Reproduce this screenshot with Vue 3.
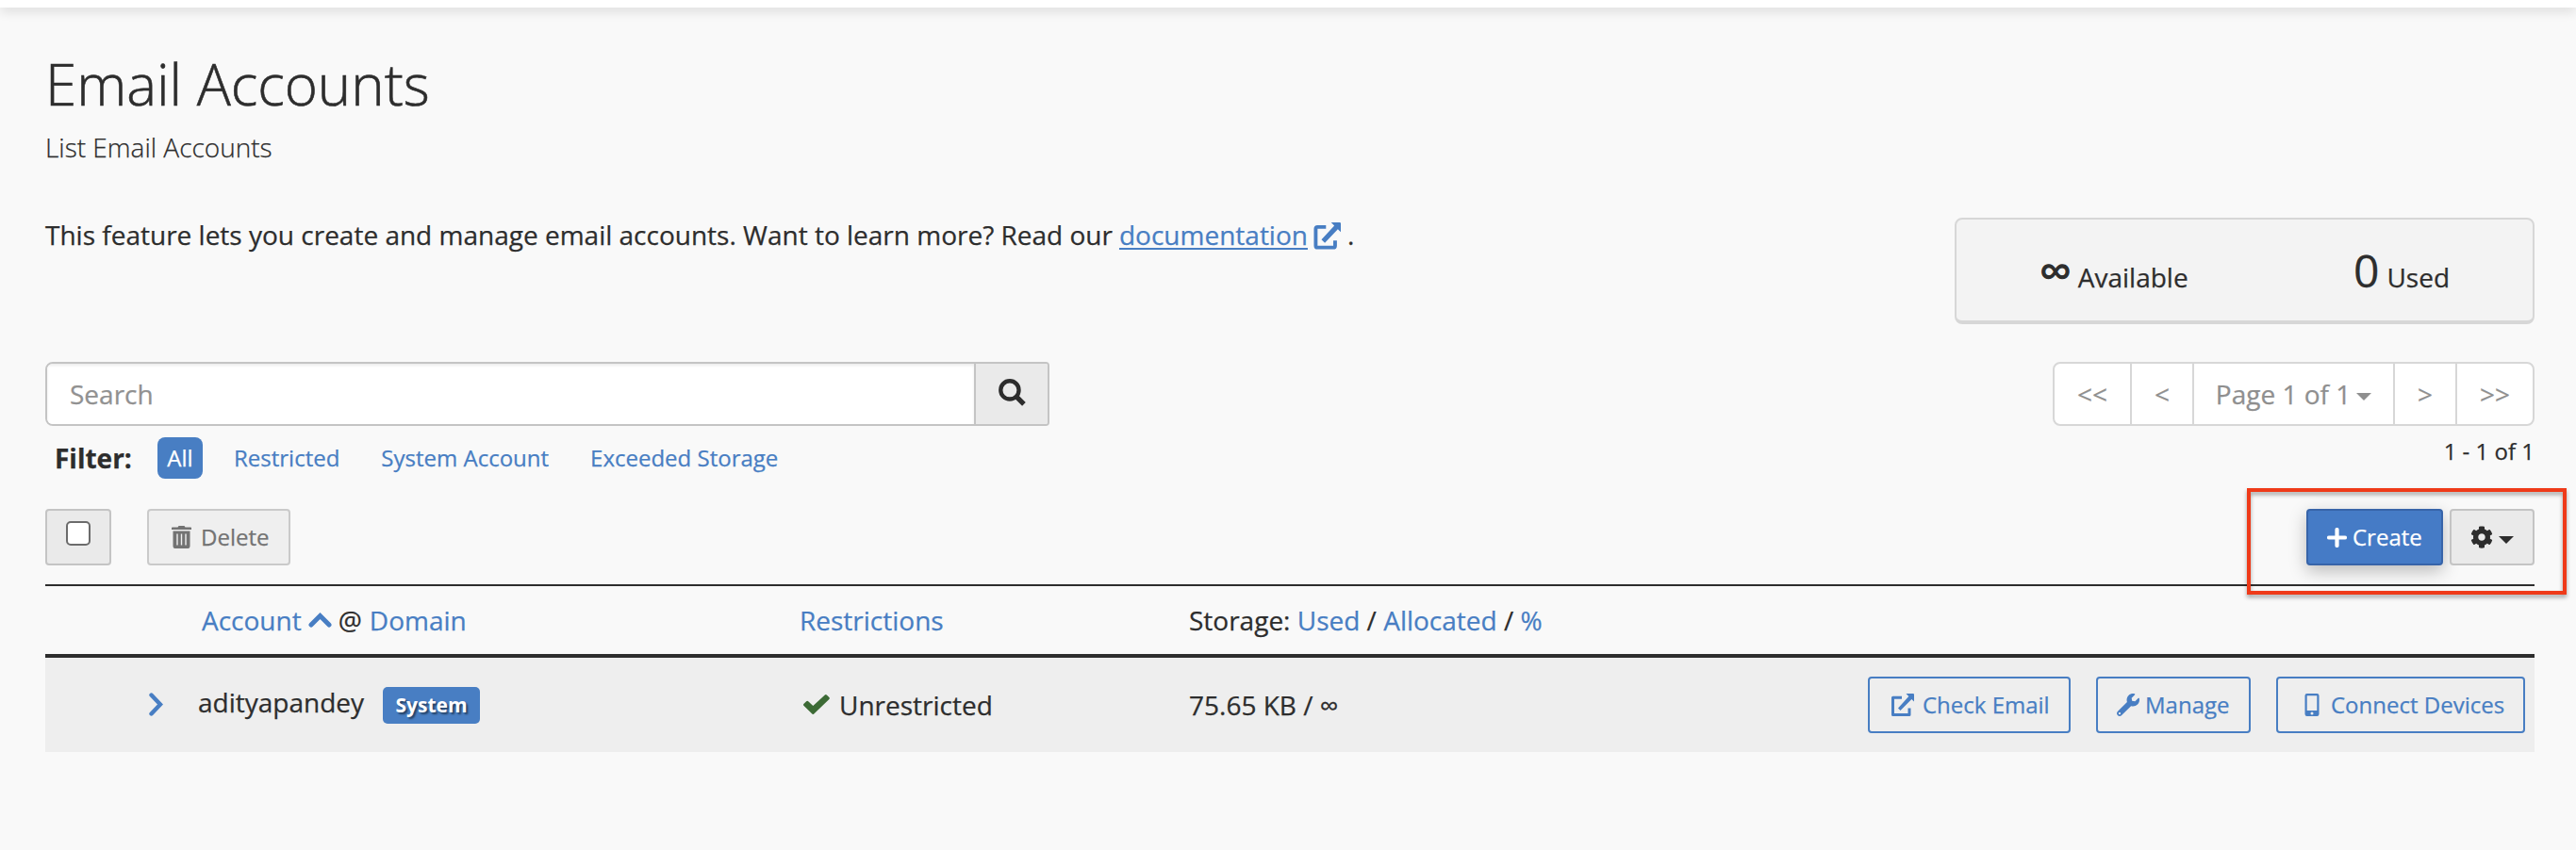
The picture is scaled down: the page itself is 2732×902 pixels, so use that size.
<script setup>
const filters = ['Restricted', 'System Account', 'Exceeded Storage']
</script>

<template>
  <div class="page">
    <div class="topbar"></div>
    <main class="content">
      <h1>Email Accounts</h1>
      <p class="subtitle">List Email Accounts</p>

      <section class="intro">
        <p class="lead"><span>This feature lets you create and manage email accounts. Want to learn more? Read our</span><a class="doc">documentation</a><svg class="ext-lg" viewBox="0 0 24 24"><path d="M11 4H3.600A1.600 1.600 0 0 0 2 5.600V20.400A1.600 1.600 0 0 0 3.600 22H17.400A1.600 1.600 0 0 0 19 20.400V16" fill="none" stroke="currentColor" stroke-width="3.200" /><path d="M15.500 0H23a1 1 0 0 1 1 1v7.500l-2.600-2.600L10 18l-3-3L18.300 2.900z" fill="currentColor" /></svg><span class="dot">.</span></p>
        <div class="stats">
          <div class="stat avail"><span class="big inf">∞</span> <span>Available</span></div>
          <div class="stat used"><span class="big">0</span> <span>Used</span></div>
        </div>
      </section>

      <section class="finder">
        <div class="search">
          <div class="input">Search</div>
          <div class="search-btn">
            <svg viewBox="0 0 28 28"><circle cx="11.500" cy="11.500" r="9.300" fill="none" stroke="currentColor" stroke-width="4.200" /><path d="M18 18l8 8" stroke="currentColor" stroke-width="5" /></svg>
          </div>
        </div>
        <div class="pager">
          <span class="p1">&lt;&lt;</span>
          <span class="p2">&lt;</span>
          <span class="p3">Page 1 of 1<i class="caret"></i></span>
          <span class="p4">&gt;</span>
          <span class="p5">&gt;&gt;</span>
        </div>
      </section>

      <section class="filters">
        <strong>Filter:</strong>
        <span class="pill">All</span>
        <a v-for="f in filters" :key="f">{{ f }}</a>
        <span class="count">1 - 1 of 1</span>
      </section>

      <section class="toolbar">
        <div class="btn check-all"><span class="checkbox"></span></div>
        <div class="btn delete">
          <svg viewBox="0 0 21 24"><path fill-rule="evenodd" fill="currentColor" d="M0.800 1.500H6.500L7.500 0h6l1 1.500h5.700a.8.800 0 0 1 .8.800V4H0V2.300a.8.800 0 0 1 .8-.8zM1.500 5.500h18V21.800A2.200 2.200 0 0 1 17.300 24H3.700a2.200 2.200 0 0 1-2.200-2.200zM5.300 8.500v12h1.400v-12zM9.800 8.500v12h1.400v-12zM14.300 8.500v12h1.400v-12z" /></svg>
          <span>Delete</span>
        </div>
        <div class="btn create">
          <svg viewBox="0 0 21 21"><path d="M10.500 2v17M2 10.500h17" stroke="currentColor" stroke-width="4.200" stroke-linecap="round" /></svg>
          <span>Create</span>
        </div>
        <div class="btn gear">
          <svg viewBox="0 0 512 512"><path fill="currentColor" d="M487.400 315.700l-42.600-24.600c4.300-23.200 4.300-47 0-70.200l42.600-24.600c4.900-2.800 7.100-8.600 5.500-14-11.100-35.600-30-67.800-54.700-94.600-3.800-4.100-10-5.100-14.800-2.300L380.800 110c-17.900-15.400-38.500-27.300-60.800-35.100V25.800c0-5.600-3.900-10.500-9.400-11.700-36.700-8.200-74.300-7.800-109.200 0-5.500 1.200-9.400 6.100-9.400 11.700V75c-22.200 7.900-42.800 19.800-60.800 35.100L88.700 85.500c-4.900-2.800-11-1.900-14.800 2.300-24.700 26.700-43.600 58.900-54.700 94.600-1.700 5.400.6 11.200 5.500 14L67.300 221c-4.300 23.200-4.300 47 0 70.200l-42.600 24.600c-4.900 2.800-7.100 8.600-5.500 14 11.100 35.600 30 67.800 54.700 94.600 3.800 4.100 10 5.100 14.800 2.300l42.600-24.600c17.900 15.400 38.500 27.300 60.800 35.100v49.200c0 5.600 3.900 10.500 9.400 11.700 36.700 8.200 74.300 7.800 109.200 0 5.500-1.200 9.400-6.100 9.400-11.700v-49.200c22.200-7.900 42.800-19.800 60.800-35.100l42.600 24.600c4.900 2.800 11 1.900 14.800-2.300 24.700-26.700 43.600-58.900 54.700-94.600 1.500-5.500-.7-11.300-5.600-14.100zM256 336c-44.100 0-80-35.900-80-80s35.900-80 80-80 80 35.900 80 80-35.900 80-80 80z" /></svg>
          <i class="caret"></i>
        </div>
        <div class="highlight"></div>
      </section>

      <div class="table">
        <div class="row head">
          <div class="account"><a>Account</a><svg class="sort" viewBox="0 0 25 17"><path d="M3 14l9.500-9.500L22 14" fill="none" stroke="currentColor" stroke-width="5" stroke-linecap="round" /></svg><span>@</span><a class="domain">Domain</a></div>
          <div class="restrict"><a>Restrictions</a></div>
          <div class="storage">Storage: <a>Used</a> / <a>Allocated</a> / <a>%</a></div>
        </div>
        <div class="row body">
          <svg class="expand" viewBox="0 0 15 25"><path d="M2.500 2.500l9.500 10-9.500 10" fill="none" stroke="currentColor" stroke-width="4.400" stroke-linecap="round" /></svg>
          <div class="account"><span class="name">adityapandey</span><span class="badge">System</span></div>
          <div class="restrict"><svg class="tick" viewBox="0 0 28 21"><path d="M0.600 9.800L3.200 7.300a1.500 1.500 0 0 1 2 0L10.300 12 22.800.500a1.500 1.500 0 0 1 2 0l2.600 2.500a1.500 1.500 0 0 1 0 2L11.300 20.600a1.500 1.500 0 0 1-2 0L.6 12a1.500 1.500 0 0 1 0-2.200z" fill="currentColor" /></svg>Unrestricted</div>
          <div class="storage">75.65 KB / ∞</div>
          <div class="actions">
            <div class="action mail">
              <svg viewBox="0 0 24 24"><path d="M11 4.200H1.500V22.500H19V15.500" fill="none" stroke="currentColor" stroke-width="3" stroke-linejoin="round" /><path d="M15.500 0H23a1 1 0 0 1 1 1v7.500l-2.600-2.600L9.500 18l-2.500-2.500L18.300 2.900z" fill="currentColor" /></svg>
              <span>Check Email</span>
            </div>
            <div class="action manage">
              <svg viewBox="0 0 512 512"><path fill="currentColor" d="M507.730 109.100c-2.240-9.030-13.540-12.090-20.120-5.510l-74.360 74.360-67.880-11.310-11.310-67.880 74.360-74.360c6.620-6.620 3.430-17.900-5.660-20.160-47.380-11.740-99.550.91-136.580 37.930-39.640 39.640-50.550 97.100-34.050 147.200L18.740 402.760c-24.990 24.990-24.990 65.510 0 90.500 24.990 24.990 65.510 24.990 90.500 0l213.210-213.210c50.120 16.710 107.470 5.680 147.370-34.220 37.070-37.070 49.700-89.320 37.910-136.730zM64 472c-13.250 0-24-10.750-24-24 0-13.260 10.750-24 24-24s24 10.740 24 24c0 13.250-10.750 24-24 24z" /></svg>
              <span>Manage</span>
            </div>
            <div class="action devices">
              <svg viewBox="0 0 15 24"><path fill="currentColor" fill-rule="evenodd" d="M2.200 0h10.600A2.200 2.200 0 0 1 15 2.200v19.600a2.200 2.200 0 0 1-2.200 2.200H2.200A2.200 2.200 0 0 1 0 21.800V2.200A2.200 2.200 0 0 1 2.200 0zM2.200 2.300v15.700h10.600V2.300zM7.500 19.500a1.500 1.500 0 1 0 0 3 1.500 1.500 0 0 0 0-3z" /></svg>
              <span>Connect Devices</span>
            </div>
          </div>
        </div>
      </div>
    </main>
  </div>
</template>

<style>
html, body { background: #f9f9f9; }
</style>

<style scoped>
* { box-sizing: border-box; }
.page {
  height: 902px; overflow: hidden; background: #f9f9f9; color: #2d2d2d;
  font-family: "Open Sans", "Noto Sans", sans-serif; font-size: 28px; line-height: 40px;
  -webkit-text-stroke: .25px currentColor;
}
svg { display: block; flex: none; }
a { color: #487ec3; }
.topbar { height: 8px; background: #fff; box-shadow: 0 4px 12px rgba(0, 0, 0, .14); }
.content { padding: 0 44px 0 48px; display: flex; flex-direction: column; }
h1 { margin: 39px 0 0; font-size: 60px; line-height: 84px; font-weight: 300; -webkit-text-stroke-width: .6px; }
.subtitle { margin: 5px 0 0; font-weight: 300; }
.intro { display: flex; justify-content: space-between; margin-top: 55px; height: 113px; }
.lead { margin: -2px 0 0; display: flex; white-space: nowrap; }
.doc { text-decoration: underline; text-decoration-thickness: 2px; text-underline-offset: 3px; margin-left: 7px; }
.ext-lg { width: 29px; height: 29px; margin: 7px 0 0 6px; color: #487ec3; }
.dot { margin-left: 7px; }
.stats { width: 615px; background: #f3f3f3; border: 2px solid #d7d7d7; border-bottom-width: 4px; border-radius: 8px; display: flex; }
.stat { display: flex; align-items: baseline; padding-top: 19px; line-height: 70px; }
.stat .big { font-size: 48px; }
.stat .inf { -webkit-text-stroke-width: 1.2px; }
.avail { margin-left: 88px; width: 333px; gap: 7px; }
.used { gap: 8px; }
.finder { display: flex; justify-content: space-between; margin-top: 40px; height: 68px; }
.search { width: 1065px; display: flex; border: 2px solid #c4c4c4; border-radius: 8px 4px 4px 8px; overflow: hidden; }
.input { flex: 1; background: #fff; color: #919191; padding: 12px 24px; box-shadow: inset 0 2px 3px rgba(0, 0, 0, .08); }
.search-btn { width: 78px; background: #eaeaea; border-left: 2px solid #c4c4c4; padding: 16px 0 0 24px; }
.search-btn svg { width: 29px; height: 29px; }
.pager { width: 511px; display: flex; background: #fff; border: 2px solid #d7d7d7; border-radius: 8px; color: #8f8f8f; line-height: 64px; text-align: center; }
.pager span { border-right: 2px solid #d7d7d7; display: flex; justify-content: center; align-items: center; }
.p1 { width: 82px; } .p2 { width: 66px; } .p3 { width: 213px; } .p4 { width: 66px; }
.pager .p5 { flex: 1; border-right: 0; }
.caret { width: 0; height: 0; border: 8px solid transparent; border-top-color: currentColor; border-bottom: 0; }
.p3 .caret { margin: 5px 0 0 6px; }
.filters { display: flex; align-items: center; height: 68px; font-size: 24px; }
.filters strong { font-size: 28px; margin-left: 10px; width: 109px; }
.pill { width: 48px; height: 44px; line-height: 44px; text-align: center; color: #fff; background: #487ec3; border-radius: 8px; margin-right: -11px; }
.filters a { margin-left: 44px; }
.count { margin-left: auto; margin-top: -14px; }
.toolbar { display: flex; position: relative; margin-top: 20px; height: 60px; font-size: 24px; }
.btn { height: 60px; border: 2px solid #c4c4c4; border-radius: 4px; background: #eaeaea; display: flex; align-items: center; }
.check-all { width: 70px; justify-content: center; padding-bottom: 8px; }
.checkbox { width: 26px; height: 26px; border: 2px solid #6b6b6b; border-radius: 5px; background: #fff; }
.delete { width: 152px; margin-left: 38px; padding-left: 24px; gap: 10px; background: #efefef; border-color: #cacaca; color: #737373; }
.delete svg { width: 21px; height: 24px; margin-top: -1px; }
.create { width: 145px; margin-left: auto; padding-left: 20px; gap: 6px; color: #fff; background: #457bc6; border-color: #3764a9; box-shadow: 0 6px 18px rgba(0, 0, 0, .25); }
.create svg { width: 21px; height: 21px; }
.gear { width: 90px; margin-left: 7px; padding-left: 20px; gap: 6px; }
.gear svg { width: 24px; height: 24px; }
.gear .caret { margin-top: 6px; }
.highlight { position: absolute; left: 2335px; top: -22px; width: 339px; height: 113px; border: 4px solid #ef3a19; filter: drop-shadow(0 3px 2px rgba(0, 0, 0, .35)); }
.table { margin-top: 20px; border-top: 2px solid #2d2d2d; }
.row { display: grid; grid-template-columns: 165px 635px 413px 1fr; }
.row .account { grid-column: 2; } .row .restrict { grid-column: 3; } .row .storage { grid-column: 4; }
.head { height: 76px; border-bottom: 4px solid #2d2d2d; line-height: 72px; }
.head .account { display: flex; padding-left: 1px; }
.sort { width: 25px; height: 17px; color: #487ec3; margin: 27px 7px 0; }
.domain { margin-left: 8px; }
.body { height: 100px; background: #eee; line-height: 100px; grid-template-columns: 162px 640px 411px 495px 1fr; }
.expand { width: 15px; height: 25px; color: #487ec3; margin: 37px 0 0 110px; grid-column: 1; }
.body .account { display: flex; }
.name { line-height: 95px; }
.badge { height: 39px; width: 103px; margin: 31px 0 0 20px; line-height: 39px; text-align: center; font-size: 21px; font-weight: 700; color: #fff; background: #487ec3; border-radius: 5px; text-shadow: 2px 2px 2px rgba(0, 0, 0, .5); -webkit-text-stroke-width: 0; }
.body .restrict { display: flex; padding-left: 2px; }
.tick { width: 28px; height: 21px; color: #3c6a35; margin: 39px 10px 0 0; }
.actions { grid-column: 5; display: flex; justify-content: flex-end; gap: 27px; padding: 20px 10px 0 0; font-size: 24px; line-height: 56px; color: #487ec3; }
.action { height: 60px; border: 2px solid #487ec3; border-radius: 4px; display: flex; white-space: nowrap; }
.action svg { width: 24px; height: 24px; margin: 16px 0 0; }
.mail { width: 215px; padding-left: 23px; gap: 9px; }
.manage { width: 164px; padding-left: 20px; gap: 6px; }
.devices { width: 264px; padding-left: 28px; gap: 12px; }
.devices svg { width: 16px; }
</style>
